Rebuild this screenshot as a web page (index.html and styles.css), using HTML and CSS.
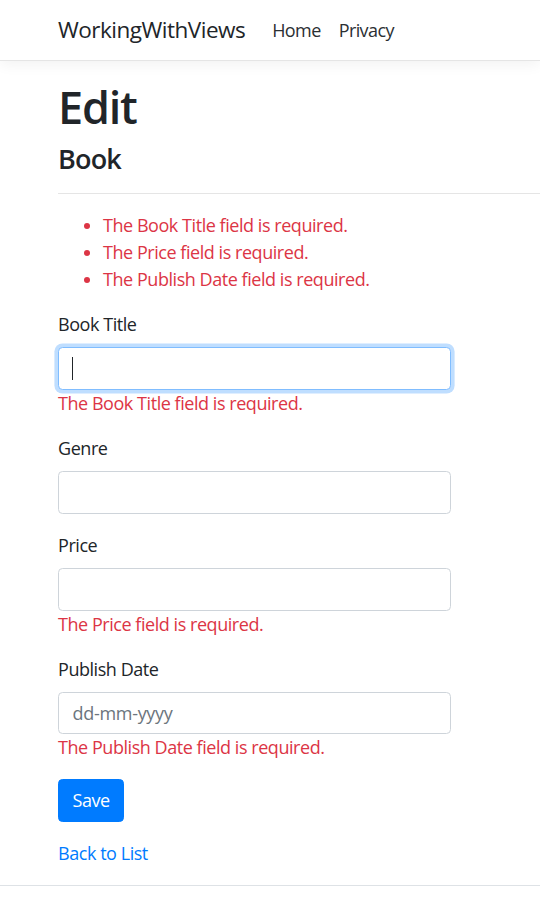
FILE: index.html
```html
<!DOCTYPE html>
<html lang="en">
<head>
<meta charset="utf-8">
<title>Edit - WorkingWithViews</title>
<link rel="stylesheet" href="styles.css">
</head>
<body>
<header>
  <nav class="navbar">
    <a class="brand" href="#">WorkingWithViews</a>
    <ul class="nav">
      <li><a class="nav-link" href="#">Home</a></li>
      <li><a class="nav-link" href="#">Privacy</a></li>
    </ul>
  </nav>
</header>
<main class="page">
  <h1 class="title">Edit</h1>
  <h4 class="subtitle">Book</h4>
  <hr class="rule">
  <div class="col">
    <form class="form">
      <div class="summary">
        <ul class="summary-list">
          <li>The Book Title field is required.</li>
          <li>The Price field is required.</li>
          <li>The Publish Date field is required.</li>
        </ul>
      </div>
      <div class="group">
        <label class="label">Book Title</label>
        <div class="field">
          <input class="control focused" type="text">
          <span class="caret"></span>
        </div>
        <span class="err">The Book Title field is required.</span>
      </div>
      <div class="group">
        <label class="label">Genre</label>
        <div class="field"><input class="control" type="text"></div>
      </div>
      <div class="group">
        <label class="label">Price</label>
        <div class="field"><input class="control" type="text"></div>
        <span class="err">The Price field is required.</span>
      </div>
      <div class="group">
        <label class="label">Publish Date</label>
        <div class="field"><input class="control" type="text" placeholder="dd-mm-yyyy"></div>
        <span class="err">The Publish Date field is required.</span>
      </div>
      <div class="group">
        <button class="btn" type="button">Save</button>
      </div>
    </form>
    <div class="back"><a class="link" href="#">Back to List</a></div>
  </div>
</main>
<footer class="footer"></footer>
</body>
</html>
```
FILE: styles.css
```css
* { box-sizing: border-box; }
html, body { margin: 0; padding: 0; }
body {
  font-family: "Open Sans", "Noto Sans", sans-serif;
  font-size: 18px;
  line-height: 27px;
  letter-spacing: -0.45px;
  color: #212529;
  background: #fff;
  overflow: hidden;
  height: 909px;
}
a { text-decoration: none; }

.navbar {
  height: 61px;
  display: flex;
  align-items: center;
  padding-left: 58px;
  border-bottom: 1px solid #e5e5e5;
  box-shadow: 0 4px 13px rgba(0,0,0,.05);
  background: #fff;
}
.brand {
  font-size: 22.5px;
  line-height: 34px;
  letter-spacing: -0.5px;
  color: #212529;
  margin-right: 18px;
}
.nav { display: flex; list-style: none; margin: 0; padding: 0; }
.nav-link {
  display: block;
  padding: 9px 9px;
  color: #2b2f33;
  font-size: 18px;
  letter-spacing: -0.6px;
}

.page { padding: 19px 0 18px 58px; }
.title {
  margin: 0 0 9px;
  font-size: 45px;
  line-height: 54px;
  font-weight: 600;
  letter-spacing: -1.2px;
}
.subtitle {
  margin: 0;
  font-size: 27px;
  line-height: 32.4px;
  font-weight: 600;
  letter-spacing: -0.8px;
}
.rule {
  margin: 18px 0;
  border: 0;
  border-top: 1px solid rgba(0,0,0,.1);
  height: 0;
}
.col { width: 393px; }
.form { margin: 0; }
.summary { color: #dc3545; }
.summary-list { margin: 0 0 18px; padding-left: 45px; }

.group { margin-bottom: 18px; }
.label { display: inline-block; margin-bottom: 9px; }
.field { position: relative; }
.control {
  display: block;
  width: 100%;
  height: 42.75px;
  padding: 6.75px 13.5px;
  font-family: inherit;
  font-size: 18px;
  line-height: 27px;
  letter-spacing: -0.3px;
  color: #495057;
  background: #fff;
  border: 1px solid #ced4da;
  border-radius: 4.5px;
  outline: none;
}
.control::placeholder { color: #6c757d; }
.control.focused {
  border-color: #80bdff;
  box-shadow: 0 0 0 3.6px rgba(0,123,255,.25);
}
.caret {
  position: absolute;
  left: 14px;
  top: 10px;
  width: 1px;
  height: 23px;
  background: #212529;
}
.err { color: #dc3545; }

.btn {
  display: inline-block;
  font-family: inherit;
  font-size: 18px;
  line-height: 27px;
  letter-spacing: -0.45px;
  padding: 6.75px 13.5px;
  color: #fff;
  background: #007bff;
  border: 1px solid #007bff;
  border-radius: 4.5px;
  cursor: pointer;
}
.link { color: #007bff; }

.footer {
  border-top: 1px solid #dee2e6;
  height: 24px;
}
```
